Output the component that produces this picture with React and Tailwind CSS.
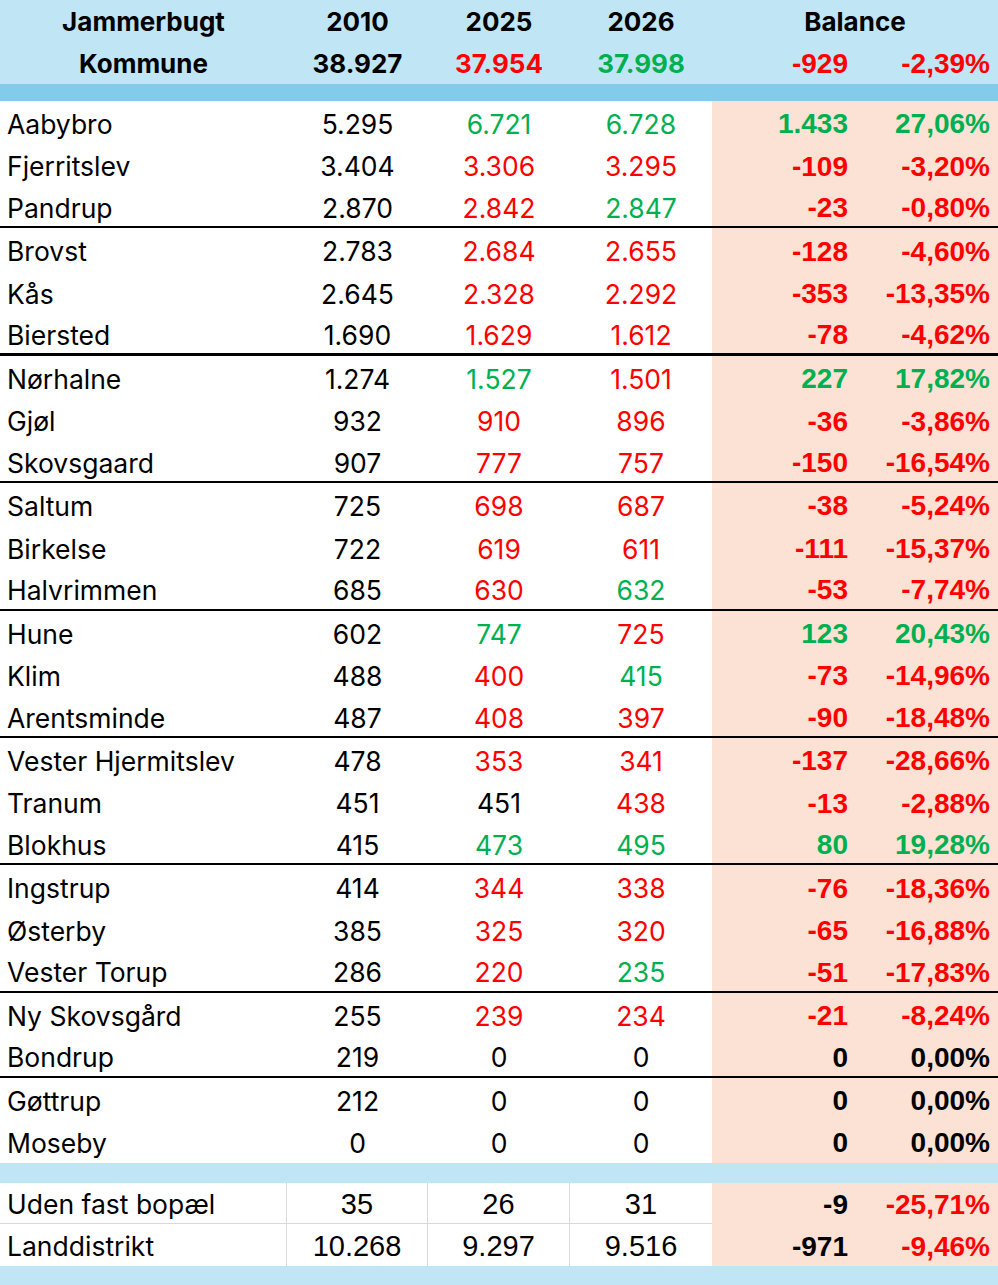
const rows = [
  ['Aabybro', '5.295', '6.721', 'g', '6.728', 'g', '1.433', 'g', '27,06%', 'g', 0],
  ['Fjerritslev', '3.404', '3.306', 'r', '3.295', 'r', '-109', 'r', '-3,20%', 'r', 0],
  ['Pandrup', '2.870', '2.842', 'r', '2.847', 'g', '-23', 'r', '-0,80%', 'r', 2],
  ['Brovst', '2.783', '2.684', 'r', '2.655', 'r', '-128', 'r', '-4,60%', 'r', 0],
  ['Kås', '2.645', '2.328', 'r', '2.292', 'r', '-353', 'r', '-13,35%', 'r', 0],
  ['Biersted', '1.690', '1.629', 'r', '1.612', 'r', '-78', 'r', '-4,62%', 'r', 3],
  ['Nørhalne', '1.274', '1.527', 'g', '1.501', 'r', '227', 'g', '17,82%', 'g', 0],
  ['Gjøl', '932', '910', 'r', '896', 'r', '-36', 'r', '-3,86%', 'r', 0],
  ['Skovsgaard', '907', '777', 'r', '757', 'r', '-150', 'r', '-16,54%', 'r', 2],
  ['Saltum', '725', '698', 'r', '687', 'r', '-38', 'r', '-5,24%', 'r', 0],
  ['Birkelse', '722', '619', 'r', '611', 'r', '-111', 'r', '-15,37%', 'r', 0],
  ['Halvrimmen', '685', '630', 'r', '632', 'g', '-53', 'r', '-7,74%', 'r', 2],
  ['Hune', '602', '747', 'g', '725', 'r', '123', 'g', '20,43%', 'g', 0],
  ['Klim', '488', '400', 'r', '415', 'g', '-73', 'r', '-14,96%', 'r', 0],
  ['Arentsminde', '487', '408', 'r', '397', 'r', '-90', 'r', '-18,48%', 'r', 2],
  ['Vester Hjermitslev', '478', '353', 'r', '341', 'r', '-137', 'r', '-28,66%', 'r', 0],
  ['Tranum', '451', '451', 'k', '438', 'r', '-13', 'r', '-2,88%', 'r', 0],
  ['Blokhus', '415', '473', 'g', '495', 'g', '80', 'g', '19,28%', 'g', 2],
  ['Ingstrup', '414', '344', 'r', '338', 'r', '-76', 'r', '-18,36%', 'r', 0],
  ['Østerby', '385', '325', 'r', '320', 'r', '-65', 'r', '-16,88%', 'r', 0],
  ['Vester Torup', '286', '220', 'r', '235', 'g', '-51', 'r', '-17,83%', 'r', 2],
  ['Ny Skovsgård', '255', '239', 'r', '234', 'r', '-21', 'r', '-8,24%', 'r', 0],
  ['Bondrup', '219', '0', 'k', '0', 'k', '0', 'k', '0,00%', 'k', 2],
  ['Gøttrup', '212', '0', 'k', '0', 'k', '0', 'k', '0,00%', 'k', 0],
  ['Moseby', '0', '0', 'k', '0', 'k', '0', 'k', '0,00%', 'k', 0],
];

const tone = { g: 'text-[#00B050]', r: 'text-[#FF0000]', k: 'text-black' };
const sepClass = { 0: '', 2: 'border-b-2 border-black', 3: 'border-b-[3px] border-black' };

// six columns: name | 2010 | 2025 | 2026 | balance | pct
const cols = 'grid grid-cols-[287px_141px_142px_142px_143px_143px] leading-none';
const aptos = "font-['Inter','Liberation_Sans',sans-serif]";
const arial = "font-['Liberation_Sans','Arial',sans-serif]";

function DataRow({ r }) {
  const [name, a, b, bc, c, cc, d, dc, p, pc, sep] = r;
  return (
    <div className={`${cols} h-[42.48px] ${sepClass[sep]}`}>
      <div className={`flex items-center pl-[7px] pt-[4px] ${aptos} text-[26.5px]`}>{name}</div>
      <div className={`flex items-center justify-center pt-[4px] ${aptos} text-[26.5px]`}>{a}</div>
      <div className={`flex items-center justify-center pt-[4px] ${aptos} text-[26.5px] ${tone[bc]}`}>{b}</div>
      <div className={`flex items-center justify-center pt-[4px] ${aptos} text-[26.5px] ${tone[cc]}`}>{c}</div>
      <div className={`flex items-center justify-end bg-[#FBE2D5] pr-[7px] pt-[4px] ${arial} text-[28px] font-bold ${tone[dc]}`}>{d}</div>
      <div className={`flex items-center justify-end bg-[#FBE2D5] pr-[8px] pt-[4px] ${arial} text-[28px] font-bold ${tone[pc]}`}>{p}</div>
    </div>
  );
}

export default function App() {
  return (
    <div className="w-[998px] h-[1285px] overflow-hidden bg-white text-black">
      <div className="bg-[#C0E6F5]">
        <div className={`${cols} h-[42px] ${aptos} text-[26px] font-bold`}>
          <div className="flex items-center justify-center pt-[2px]">Jammerbugt</div>
          <div className="flex items-center justify-center pt-[2px]">2010</div>
          <div className="flex items-center justify-center pt-[2px]">2025</div>
          <div className="flex items-center justify-center pt-[2px]">2026</div>
          <div className="col-span-2 flex items-center justify-center pt-[2px]">Balance</div>
        </div>
        <div className={`${cols} h-[42px] text-[26px] font-bold`}>
          <div className={`flex items-center justify-center pt-[2px] ${aptos}`}>Kommune</div>
          <div className={`flex items-center justify-center pt-[2px] ${aptos}`}>38.927</div>
          <div className={`flex items-center justify-center pt-[2px] ${aptos} text-[#FF0000]`}>37.954</div>
          <div className={`flex items-center justify-center pt-[2px] ${aptos} text-[#00B050]`}>37.998</div>
          <div className={`flex items-center justify-end pr-[7px] pt-[2px] ${arial} text-[28px] text-[#FF0000]`}>-929</div>
          <div className={`flex items-center justify-end pr-[8px] pt-[2px] ${arial} text-[28px] text-[#FF0000]`}>-2,39%</div>
        </div>
      </div>
      <div className="h-[17px] bg-[#83CBEB]" />

      {rows.map((r) => (
        <DataRow key={r[0]} r={r} />
      ))}

      <div className="h-[20px] bg-[#C0E6F5]" />

      <div className={`${cols} h-[41px]`}>
        <div className={`flex items-center pl-[7px] pt-[4px] border-r border-b border-[#D9D9D9] ${aptos} text-[26.5px]`}>Uden fast bopæl</div>
        <div className={`flex items-center justify-center pt-[4px] border-r border-b border-[#D9D9D9] ${arial} text-[29px]`}>35</div>
        <div className={`flex items-center justify-center pt-[4px] border-r border-b border-[#D9D9D9] ${arial} text-[29px]`}>26</div>
        <div className={`flex items-center justify-center pt-[4px] border-b border-[#D9D9D9] ${arial} text-[29px]`}>31</div>
        <div className={`flex items-center justify-end bg-[#FBE2D5] pr-[7px] pt-[4px] ${arial} text-[28px] font-bold`}>-9</div>
        <div className={`flex items-center justify-end bg-[#FBE2D5] pr-[8px] pt-[4px] ${arial} text-[28px] font-bold text-[#FF0000]`}>-25,71%</div>
      </div>
      <div className={`${cols} h-[42px]`}>
        <div className={`flex items-center pl-[7px] pt-[4px] border-r border-[#D9D9D9] ${aptos} text-[26.5px]`}>Landdistrikt</div>
        <div className={`flex items-center justify-center pt-[4px] border-r border-[#D9D9D9] ${arial} text-[29px]`}>10.268</div>
        <div className={`flex items-center justify-center pt-[4px] border-r border-[#D9D9D9] ${arial} text-[29px]`}>9.297</div>
        <div className={`flex items-center justify-center pt-[4px] ${arial} text-[29px]`}>9.516</div>
        <div className={`flex items-center justify-end bg-[#FBE2D5] pr-[7px] pt-[4px] ${arial} text-[28px] font-bold`}>-971</div>
        <div className={`flex items-center justify-end bg-[#FBE2D5] pr-[8px] pt-[4px] ${arial} text-[28px] font-bold text-[#FF0000]`}>-9,46%</div>
      </div>
      <div className="h-[19px] bg-[#C0E6F5]" />
    </div>
  );
}
